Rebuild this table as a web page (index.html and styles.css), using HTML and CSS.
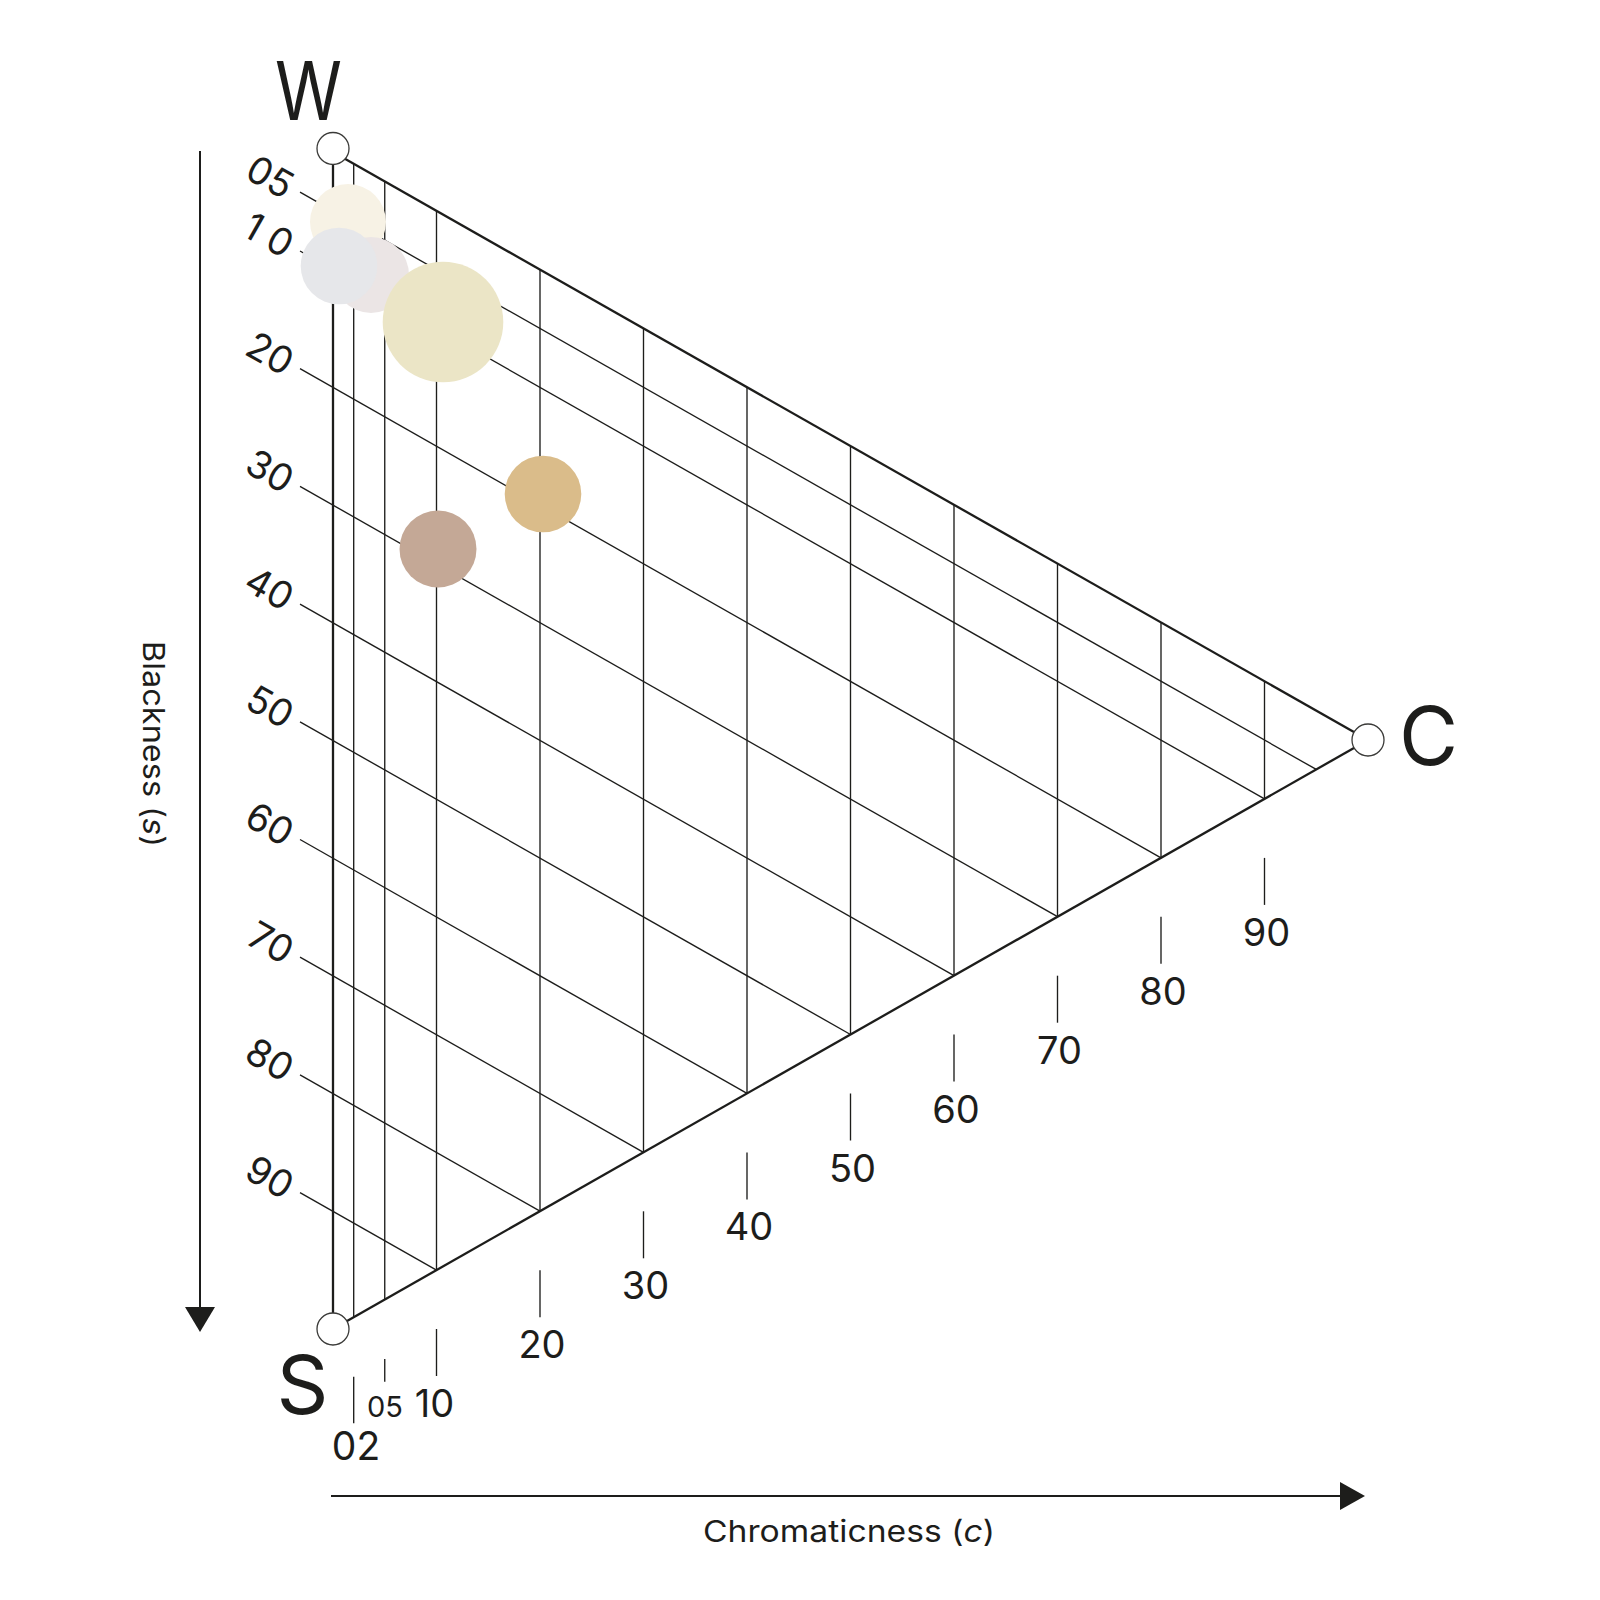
FILE: index.html
```html
<!DOCTYPE html>
<html lang="en">
<head>
<meta charset="utf-8">
<title>NCS triangle</title>
<link rel="stylesheet" href="styles.css">
</head>
<body>
<figure class="chart">
<svg class="ncs" width="1600" height="1600" viewBox="0 0 1600 1600" xmlns="http://www.w3.org/2000/svg">
  <!-- axis arrows -->
  <g class="axis">
    <line x1="200" y1="151" x2="200" y2="1308"/>
    <polygon class="head" points="185,1307 215,1307 200,1332"/>
    <line x1="331" y1="1496" x2="1341" y2="1496"/>
    <polygon class="head" points="1340,1482 1340,1510 1365,1496"/>
  </g>
  <text class="axis-label" transform="translate(143 641) rotate(90)" textLength="206" lengthAdjust="spacingAndGlyphs">Blackness (<tspan class="it">s</tspan>)</text>
  <text class="axis-label" x="703" y="1541.5" textLength="292" lengthAdjust="spacingAndGlyphs">Chromaticness (<tspan class="it">c</tspan>)</text>

  <!-- chromaticness (vertical) grid lines -->
  <g class="grid">
    <line x1="353.7" y1="163.8" x2="353.7" y2="1317.2"/>
    <line x1="384.75" y1="181.4" x2="384.75" y2="1299.6"/>
    <line x1="436.5" y1="210.8" x2="436.5" y2="1270.1"/>
    <line x1="540" y1="269.6" x2="540" y2="1211.2"/>
    <line x1="643.5" y1="328.4" x2="643.5" y2="1152.3"/>
    <line x1="747" y1="387.2" x2="747" y2="1093.4"/>
    <line x1="850.5" y1="446" x2="850.5" y2="1034.5"/>
    <line x1="954" y1="504.8" x2="954" y2="975.6"/>
    <line x1="1057.5" y1="563.6" x2="1057.5" y2="916.7"/>
    <line x1="1161" y1="622.4" x2="1161" y2="857.8"/>
    <line x1="1264.5" y1="681.2" x2="1264.5" y2="798.9"/>
  </g>
  <!-- blackness grid lines -->
  <g class="grid">
    <line x1="300" y1="192.1" x2="1316.25" y2="769.45"/>
    <line x1="300" y1="251.0" x2="1264.5" y2="798.9"/>
    <line x1="300" y1="368.7" x2="1161" y2="857.8"/>
    <line x1="300" y1="486.4" x2="1057.5" y2="916.7"/>
    <line x1="300" y1="604.1" x2="954" y2="975.6"/>
    <line x1="300" y1="721.8" x2="850.5" y2="1034.5"/>
    <line x1="300" y1="839.5" x2="747" y2="1093.4"/>
    <line x1="300" y1="957.2" x2="643.5" y2="1152.3"/>
    <line x1="300" y1="1074.9" x2="540" y2="1211.2"/>
    <line x1="300" y1="1192.6" x2="436.5" y2="1270.1"/>
  </g>
  <!-- triangle edges -->
  <g class="edge">
    <line x1="333" y1="149" x2="333" y2="1329"/>
    <line x1="333" y1="152" x2="1368" y2="740"/>
    <line x1="333" y1="1329" x2="1368" y2="740"/>
  </g>

  <!-- blackness labels -->
  <g class="tick-label side">
    <text transform="translate(300 192.1) rotate(29.6)" x="-10" y="15">05</text>
    <text transform="translate(300 251.0) rotate(29.6)" x="-10" y="15" textLength="50" lengthAdjust="spacing">10</text>
    <text transform="translate(300 368.7) rotate(29.6)" x="-10" y="15">20</text>
    <text transform="translate(300 486.4) rotate(29.6)" x="-10" y="15">30</text>
    <text transform="translate(300 604.1) rotate(29.6)" x="-10" y="15">40</text>
    <text transform="translate(300 721.8) rotate(29.6)" x="-10" y="15">50</text>
    <text transform="translate(300 839.5) rotate(29.6)" x="-10" y="15">60</text>
    <text transform="translate(300 957.2) rotate(29.6)" x="-10" y="15">70</text>
    <text transform="translate(300 1074.9) rotate(29.6)" x="-10" y="15">80</text>
    <text transform="translate(300 1192.6) rotate(29.6)" x="-10" y="15">90</text>
  </g>

  <!-- chromaticness ticks -->
  <g class="grid">
    <line x1="353.7" y1="1376.7" x2="353.7" y2="1423.3"/>
    <line x1="384.75" y1="1359" x2="384.75" y2="1381.7"/>
    <line x1="436.5" y1="1329" x2="436.5" y2="1376"/>
    <line x1="540" y1="1270.2" x2="540" y2="1317.2"/>
    <line x1="643.5" y1="1211.3" x2="643.5" y2="1258.3"/>
    <line x1="747" y1="1152.4" x2="747" y2="1199.4"/>
    <line x1="850.5" y1="1093.5" x2="850.5" y2="1140.5"/>
    <line x1="954" y1="1034.6" x2="954" y2="1081.6"/>
    <line x1="1057.5" y1="975.7" x2="1057.5" y2="1022.7"/>
    <line x1="1161" y1="916.8" x2="1161" y2="963.8"/>
    <line x1="1264.5" y1="857.9" x2="1264.5" y2="904.9"/>
  </g>
  <g class="tick-label mid">
    <text class="big2" x="356" y="1460">02</text>
    <text class="small" x="385" y="1416.7">05</text>
    <text x="434.5" y="1417">10</text>
    <text x="542" y="1358">20</text>
    <text x="645.5" y="1299">30</text>
    <text x="749" y="1240">40</text>
    <text x="852.5" y="1181.5">50</text>
    <text x="956" y="1122.6">60</text>
    <text x="1059.5" y="1063.7">70</text>
    <text x="1163" y="1004.8">80</text>
    <text x="1266.5" y="945.9">90</text>
  </g>

  <!-- colour samples -->
  <circle class="sw cream" cx="348" cy="222" r="38"/>
  <circle class="sw rose" cx="371" cy="275" r="38"/>
  <circle class="sw mist" cx="339" cy="266" r="38.3"/>
  <circle class="sw straw" cx="443" cy="322" r="60.3"/>
  <circle class="sw sand" cx="543" cy="494" r="38.3"/>
  <circle class="sw clay" cx="438" cy="549" r="38.5"/>

  <!-- vertices -->
  <circle class="node" cx="333" cy="148.5" r="16"/>
  <circle class="node" cx="333" cy="1329" r="16"/>
  <circle class="node" cx="1368" cy="740" r="16"/>
  <text class="vertex" x="275" y="120" textLength="67" lengthAdjust="spacingAndGlyphs">W</text>
  <text class="vertex mid" x="302.5" y="1414">S</text>
  <text class="vertex" x="1399" y="765">C</text>
</svg>
</figure>
</body>
</html>
```
FILE: styles.css
```css
html, body {
  margin: 0;
  padding: 0;
  background: #ffffff;
}

.chart {
  margin: 0;
  width: 1600px;
  height: 1600px;
}

.ncs {
  display: block;
}

.axis line {
  stroke: #1d1d1b;
  stroke-width: 2;
}

.axis .head {
  fill: #1d1d1b;
  stroke: none;
}

.grid line {
  stroke: #1d1d1b;
  stroke-width: 1.35;
}

.edge line {
  stroke: #1d1d1b;
  stroke-width: 2.3;
}

.node {
  fill: #ffffff;
  stroke: #3a3a38;
  stroke-width: 1.3;
}

.tick-label text {
  font-family: Inter, "Noto Sans", sans-serif;
  font-size: 37px;
  fill: #1d1d1b;
  text-anchor: end;
}

.tick-label.side text {
  font-size: 38px;
}

.tick-label.mid text {
  text-anchor: middle;
  font-size: 38px;
}

.tick-label.mid .small {
  font-size: 29px;
}

.tick-label.mid .big2 {
  font-size: 39px;
}

.axis-label {
  font-family: Inter, "Noto Sans", sans-serif;
  font-size: 30px;
  fill: #1d1d1b;
}

.axis-label .it {
  font-style: italic;
}

.vertex {
  font-family: Inter, "Noto Sans", sans-serif;
  font-size: 81px;
  fill: #1d1d1b;
}

.vertex.mid {
  text-anchor: middle;
}

.sw { stroke: none; }
.cream { fill: #f7f2e5; }
.rose  { fill: #ebe5e5; }
.mist  { fill: #e6e7ea; }
.straw { fill: #ebe5c6; }
.sand  { fill: #dabc8a; }
.clay  { fill: #c4a896; }
```
